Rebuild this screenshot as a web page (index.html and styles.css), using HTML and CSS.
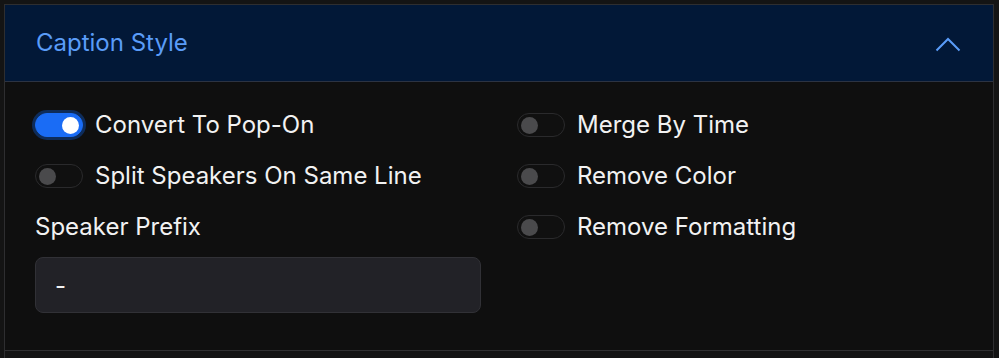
FILE: index.html
```html
<!DOCTYPE html>
<html>
<head>
<meta charset="utf-8">
<link rel="stylesheet" href="styles.css">
</head>
<body>
<div class="frame">
  <section class="panel">
    <header class="panel-head">
      <span class="panel-title">Caption Style</span>
      <svg class="chevron" width="26" height="15" viewBox="0 0 26 15"><path d="M1.5 13.5 L13 2 L24.5 13.5" fill="none" stroke="#5a9cf8" stroke-width="2"/></svg>
    </header>
    <div class="panel-body">
      <div class="col">
        <div class="row"><span class="toggle on"><span class="knob"></span></span><span class="label">Convert To Pop-On</span></div>
        <div class="row"><span class="toggle"><span class="knob"></span></span><span class="label">Split Speakers On Same Line</span></div>
        <div class="row"><span class="label plain">Speaker Prefix</span></div>
        <div class="input">-</div>
      </div>
      <div class="col">
        <div class="row"><span class="toggle"><span class="knob"></span></span><span class="label">Merge By Time</span></div>
        <div class="row"><span class="toggle"><span class="knob"></span></span><span class="label">Remove Color</span></div>
        <div class="row"><span class="toggle"><span class="knob"></span></span><span class="label">Remove Formatting</span></div>
      </div>
    </div>
  </section>
</div>
</body>
</html>
```
FILE: styles.css
```css
* { box-sizing: border-box; }
html, body { margin: 0; padding: 0; }
body {
  background: #141414;
  font-family: Inter, "Noto Sans", sans-serif;
  width: 999px;
  height: 358px;
  overflow: hidden;
}
.frame {
  margin: 4px 0 0 4px;
  width: 990px;
  height: 354px;
  border: 1px solid #2e2e30;
  border-bottom: none;
  background: #141414;
}
.panel {
  background: #0f0f0f;
  border-bottom: 1px solid #303032;
}
.panel-head {
  height: 77px;
  background: #021837;
  border-bottom: 1px solid #2c3342;
  display: flex;
  align-items: center;
  justify-content: space-between;
  padding: 0 32px 0 31px;
}
.panel-title {
  color: #5a9cf8;
  font-size: 24px;
  line-height: 30px;
}
.chevron { display: block; margin-top: 2px; }
.panel-body {
  display: grid;
  grid-template-columns: 446px 446px;
  column-gap: 36px;
  padding: 28px 30px 37px 30px;
}
.col {
  display: flex;
  flex-direction: column;
  gap: 21px;
}
.row {
  height: 30px;
  display: flex;
  align-items: center;
  gap: 12px;
}
.label {
  color: #f2f2f2;
  font-size: 24px;
  line-height: 30px;
}
.toggle {
  width: 48px;
  height: 24px;
  border-radius: 12px;
  border: 1px solid #2a2a2c;
  background: #101010;
  display: flex;
  align-items: center;
  padding: 0 3px;
  flex: none;
}
.knob {
  width: 17px;
  height: 17px;
  border-radius: 50%;
  background: #4a4a4c;
}
.toggle.on {
  background: #1a6cf5;
  border-color: #1a6cf5;
  box-shadow: 0 0 0 3px #0e2c5a;
  justify-content: flex-end;
}
.toggle.on .knob { background: #ffffff; }
.input {
  margin-top: -6px;
  height: 56px;
  background: #222227;
  border: 1px solid #313136;
  border-radius: 8px;
  color: #f2f2f2;
  font-size: 24px;
  display: flex;
  align-items: center;
  padding: 0 19px;
}
```
